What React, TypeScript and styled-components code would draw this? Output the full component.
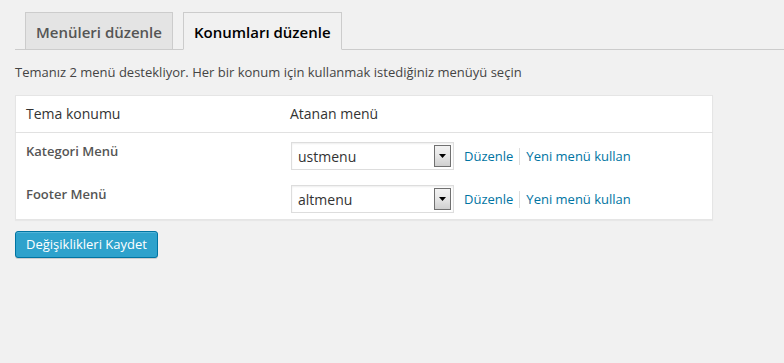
import React from 'react';
import styled, { createGlobalStyle } from 'styled-components';

const GlobalStyle = createGlobalStyle`
    html, body {
        margin: 0;
        padding: 0;
        background: #f1f1f1;
    }
    body {
        font-family: "Open Sans", "Liberation Sans", sans-serif;
        color: #444;
    }
`;

const Wrap = styled.div`
    padding: 12px 0 20px 15px;
`;

const TabNav = styled.nav`
    display: flex;
    gap: 10px;
    padding-left: 10px;
    border-bottom: 1px solid #ccc;
    height: 37px;
`;

const Tab = styled.a<{ $active?: boolean }>`
    display: block;
    box-sizing: border-box;
    height: ${(p) => (p.$active ? '38px' : '37px')};
    padding: 7px 10px 0 10px;
    border: 1px solid #ccc;
    border-bottom: ${(p) => (p.$active ? '1px solid #f1f1f1' : 'none')};
    background: ${(p) => (p.$active ? '#f1f1f1' : '#e4e4e4')};
    color: ${(p) => (p.$active ? '#000' : '#555')};
    font-size: 15px;
    font-weight: 600;
    line-height: 24px;
    text-decoration: none;
    white-space: nowrap;
`;

const Intro = styled.p`
    margin: 12px 0 0;
    font-size: 13px;
    line-height: 20px;
    color: #444;
`;

const Table = styled.table`
    margin-top: 13px;
    width: 698px;
    border-collapse: collapse;
    border-spacing: 0;
    background: #fff;
    border: 1px solid #e5e5e5;
    box-shadow: 0 1px 1px rgba(0, 0, 0, 0.04);
    table-layout: fixed;
`;

const HeadCell = styled.th<{ $width?: number }>`
    width: ${(p) => (p.$width ? `${p.$width}px` : 'auto')};
    padding: 8px 10px;
    border-bottom: 1px solid #e1e1e1;
    text-align: left;
    font-size: 14px;
    font-weight: 400;
    line-height: 20px;
    color: #333;
`;

const Label = styled.td`
    padding: 8px 10px 7px;
    vertical-align: top;
    font-size: 13px;
    font-weight: 600;
    line-height: 20px;
    color: #555;
`;

const Cell = styled.td`
    padding: 9px 10px 6px 11px;
    vertical-align: top;
`;

const Controls = styled.div`
    display: flex;
    align-items: center;
    height: 28px;
`;

const SelectWrap = styled.div`
    position: relative;
    width: 163px;
    height: 28px;
`;

const Select = styled.select`
    appearance: none;
    -webkit-appearance: none;
    box-sizing: border-box;
    width: 100%;
    height: 28px;
    margin: 0;
    padding: 0 24px 0 6px;
    border: 1px solid #ddd;
    border-radius: 0;
    background: #fff;
    box-shadow: inset 0 1px 2px rgba(0, 0, 0, 0.07);
    font-family: "Open Sans", "Liberation Sans", sans-serif;
    font-size: 14px;
    color: #333;
    outline: none;
`;

const Arrow = styled.span`
    position: absolute;
    top: 3px;
    right: 3px;
    box-sizing: border-box;
    width: 17px;
    height: 22px;
    border: 1px solid #707070;
    background: linear-gradient(#f2f2f2, #e6e6e6 50%, #cfcfcf);
    display: flex;
    align-items: center;
    justify-content: center;
    pointer-events: none;
`;

const Links = styled.span`
    display: flex;
    align-items: center;
    margin-left: 10px;
    font-size: 13px;
    line-height: 20px;
`;

const LinkItem = styled.a`
    color: #0074a2;
    text-decoration: none;
`;

const Sep = styled.span`
    display: inline-block;
    width: 1px;
    height: 17px;
    background: #ddd;
    margin: 0 6px 0 6px;
`;

const SaveButton = styled.button`
    margin-top: 11px;
    box-sizing: border-box;
    height: 27px;
    padding: 0 10px;
    border: 1px solid #0074a2;
    border-radius: 3px;
    background: #2ea2cc;
    box-shadow: inset 0 1px 0 rgba(120, 200, 230, 0.5), 0 1px 0 rgba(0, 0, 0, 0.15);
    color: #fff;
    font-family: "Open Sans", "Liberation Sans", sans-serif;
    font-size: 13px;
    line-height: 25px;
    cursor: pointer;
`;

const locations = [
    { label: 'Kategori Menü', menu: 'ustmenu' },
    { label: 'Footer Menü', menu: 'altmenu' },
];

const App = () => {
    return (
        <Wrap>
            <GlobalStyle />
            <TabNav>
                <Tab href="#">Menüleri düzenle</Tab>
                <Tab href="#" $active>Konumları düzenle</Tab>
            </TabNav>
            <Intro>Temanız 2 menü destekliyor. Her bir konum için kullanmak istediğiniz menüyü seçin</Intro>
            <Table>
                <thead>
                    <tr>
                        <HeadCell $width={244}>Tema konumu</HeadCell>
                        <HeadCell>Atanan menü</HeadCell>
                    </tr>
                </thead>
                <tbody>
                    {locations.map((loc) => (
                        <tr key={loc.label}>
                            <Label>{loc.label}</Label>
                            <Cell>
                                <Controls>
                                    <SelectWrap>
                                        <Select defaultValue={loc.menu}>
                                            <option value="ustmenu">ustmenu</option>
                                            <option value="altmenu">altmenu</option>
                                        </Select>
                                        <Arrow>
                                            <svg width="7" height="4" viewBox="0 0 7 4">
                                                <path d="M0 0h7L3.5 4z" fill="#000" />
                                            </svg>
                                        </Arrow>
                                    </SelectWrap>
                                    <Links>
                                        <LinkItem href="#">Düzenle</LinkItem>
                                        <Sep />
                                        <LinkItem href="#">Yeni menü kullan</LinkItem>
                                    </Links>
                                </Controls>
                            </Cell>
                        </tr>
                    ))}
                </tbody>
            </Table>
            <SaveButton type="button">Değişiklikleri Kaydet</SaveButton>
        </Wrap>
    );
};

export default App;
